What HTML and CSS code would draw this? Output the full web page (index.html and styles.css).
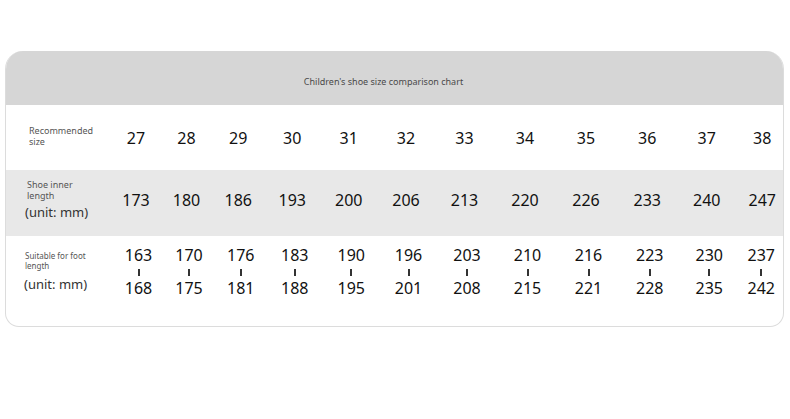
FILE: index.html
```html
<!DOCTYPE html>
<html lang="en">
<head>
<meta charset="utf-8">
<title>Children's shoe size comparison chart</title>
<link rel="stylesheet" href="styles.css">
</head>
<body>
<div class="card">
  <div class="header">Children's shoe size comparison chart</div>
  <div class="row row-size">
    <div class="label lab1"><span class="ln">Recommended</span><span class="ln">size</span></div>
    <div class="cell">27</div><div class="cell">28</div><div class="cell">29</div><div class="cell">30</div>
    <div class="cell">31</div><div class="cell">32</div><div class="cell">33</div><div class="cell">34</div>
    <div class="cell">35</div><div class="cell">36</div><div class="cell">37</div><div class="cell">38</div>
  </div>
  <div class="row row-inner">
    <div class="label lab2"><span class="ln">Shoe inner</span><span class="ln">length</span><span class="unit">(unit: mm)</span></div>
    <div class="cell">173</div><div class="cell">180</div><div class="cell">186</div><div class="cell">193</div>
    <div class="cell">200</div><div class="cell">206</div><div class="cell">213</div><div class="cell">220</div>
    <div class="cell">226</div><div class="cell">233</div><div class="cell">240</div><div class="cell">247</div>
  </div>
  <div class="row row-foot">
    <div class="label lab3"><span class="ln xs">Suitable for foot</span><span class="ln xs">length</span><span class="unit unit3">(unit: mm)</span></div>
    <div class="cell range"><span>163</span><i class="tick"></i><span>168</span></div>
    <div class="cell range"><span>170</span><i class="tick"></i><span>175</span></div>
    <div class="cell range"><span>176</span><i class="tick"></i><span>181</span></div>
    <div class="cell range"><span>183</span><i class="tick"></i><span>188</span></div>
    <div class="cell range"><span>190</span><i class="tick"></i><span>195</span></div>
    <div class="cell range"><span>196</span><i class="tick"></i><span>201</span></div>
    <div class="cell range"><span>203</span><i class="tick"></i><span>208</span></div>
    <div class="cell range"><span>210</span><i class="tick"></i><span>215</span></div>
    <div class="cell range"><span>216</span><i class="tick"></i><span>221</span></div>
    <div class="cell range"><span>223</span><i class="tick"></i><span>228</span></div>
    <div class="cell range"><span>230</span><i class="tick"></i><span>235</span></div>
    <div class="cell range"><span>237</span><i class="tick"></i><span>242</span></div>
  </div>
</div>
</body>
</html>
```
FILE: styles.css
```css
html, body {
  margin: 0;
  padding: 0;
  background: #ffffff;
}
body {
  font-family: "Noto Sans", "Open Sans", sans-serif;
  color: #111;
}
.card {
  margin: 51px 0 0 5px;
  width: 777px;
  border: 1px solid #dcdcdc;
  border-top: none;
  border-radius: 18px 18px 14px 14px;
  overflow: hidden;
  background: #fff;
}
.header {
  height: 54px;
  box-sizing: border-box;
  background: #d6d6d6;
  display: flex;
  align-items: center;
  justify-content: center;
  padding: 7px 22px 0 0;
  font-size: 9px;
  color: #4a4a4a;
  margin: 0 -1px;
}
.row {
  display: grid;
  grid-template-columns: 105px 50px 51px 52.5px 55.5px 57.5px 57px 60px 61px 61px 61.5px 57.5px 47.5px;
  align-items: center;
}
.row-size {
  height: 65px;
}
.row-inner {
  height: 66px;
  background: #e8e8e8;
}
.row-inner .cell {
  margin-bottom: 6px;
}
.row-foot {
  height: 90px;
  align-items: start;
  padding-top: 9px;
  box-sizing: border-box;
}
.cell {
  text-align: center;
  font-size: 16px;
  line-height: 20px;
  color: #111;
}
.cell:last-child {
  padding-left: 6px;
}
.range {
  display: flex;
  flex-direction: column;
  align-items: center;
  padding-left: 5px;
}
.range:last-child {
  padding-left: 4px;
}
.tick {
  display: block;
  width: 2px;
  height: 7px;
  background: #333;
  margin: 4px 0 2px;
}
.label {
  display: flex;
  flex-direction: column;
  color: #555;
}
.ln {
  display: block;
  font-size: 9px;
  line-height: 10.5px;
  height: 10.5px;
}
.ln.xs {
  font-size: 8px;
  line-height: 10px;
  height: 10px;
}
.unit {
  font-size: 13px;
  line-height: 16px;
  margin-left: -2px;
  margin-top: 3px;
  color: #333;
}
.lab1 {
  padding-left: 23px;
  margin-top: -2px;
}
.lab2 {
  padding-left: 21px;
  margin-top: -6px;
}
.lab3 {
  padding-left: 19px;
  padding-top: 6px;
}
.unit3 {
  margin-left: -1px;
  margin-top: 5px;
}
```
